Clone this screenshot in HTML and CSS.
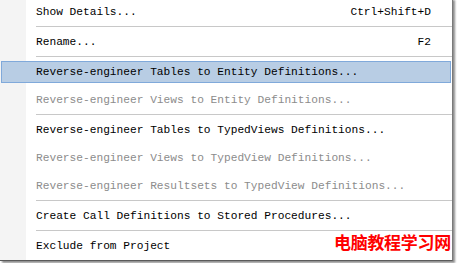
FILE: index.html
```html
<!DOCTYPE html>
<html>
<head>
<meta charset="utf-8">
<link rel="stylesheet" href="styles.css">
</head>
<body>
<div class="menu">
  <div class="item"><span class="label">Show Details...</span><span class="key">Ctrl+Shift+D</span></div>
  <div class="sep"></div>
  <div class="item"><span class="label">Rename...</span><span class="key">F2</span></div>
  <div class="sep"></div>
  <div class="item active"><span class="label">Reverse-engineer Tables to Entity Definitions...</span></div>
  <div class="item disabled"><span class="label">Reverse-engineer Views to Entity Definitions...</span></div>
  <div class="sep"></div>
  <div class="item"><span class="label">Reverse-engineer Tables to TypedViews Definitions...</span></div>
  <div class="item disabled"><span class="label">Reverse-engineer Views to TypedView Definitions...</span></div>
  <div class="item disabled"><span class="label">Reverse-engineer Resultsets to TypedView Definitions...</span></div>
  <div class="sep"></div>
  <div class="item"><span class="label">Create Call Definitions to Stored Procedures...</span></div>
  <div class="sep"></div>
  <div class="item"><span class="label">Exclude from Project</span></div>
</div>
<div class="watermark">电脑教程学习网</div>
</body>
</html>
```
FILE: styles.css
```css
html, body {
  margin: 0;
  padding: 0;
  background: #ffffff;
  overflow: hidden;
}
body {
  width: 458px;
  height: 263px;
  position: relative;
  font-family: "Liberation Mono", "DejaVu Sans Mono", monospace;
  font-size: 11.2px;
  color: #000;
}
.menu {
  display: flex;
  flex-direction: column;
  width: 452px;
  margin-top: -2px;
  background: linear-gradient(to right, #f4f4f4 26px, #ffffff 26px);
  border-right: 1px solid #7a7a7a;
  border-bottom: 1px solid #5a5a5a;
  box-shadow: 2px 2px 2px rgba(0, 0, 0, 0.45);
}
.item {
  box-sizing: border-box;
  height: 22px;
  margin: 3px 1px 3px 1px;
  padding: 0 19px 0 34px;
  border: 1px solid transparent;
  display: flex;
  align-items: center;
  justify-content: space-between;
  white-space: nowrap;
}
.item.active {
  background: #b8cde4;
  border-color: #80a9da;
}
.item.disabled {
  color: #8c8c8c;
}
.sep {
  height: 0;
  margin-left: 36px;
  border-top: 1px solid #c8c8c8;
  border-bottom: 1px solid #ffffff;
}
.watermark {
  position: absolute;
  left: 334px;
  top: 232px;
  font-family: "Noto Sans CJK SC", sans-serif;
  font-size: 17px;
  font-weight: bold;
  line-height: 20px;
  color: #ff0000;
  letter-spacing: -0.3px;
}
```
